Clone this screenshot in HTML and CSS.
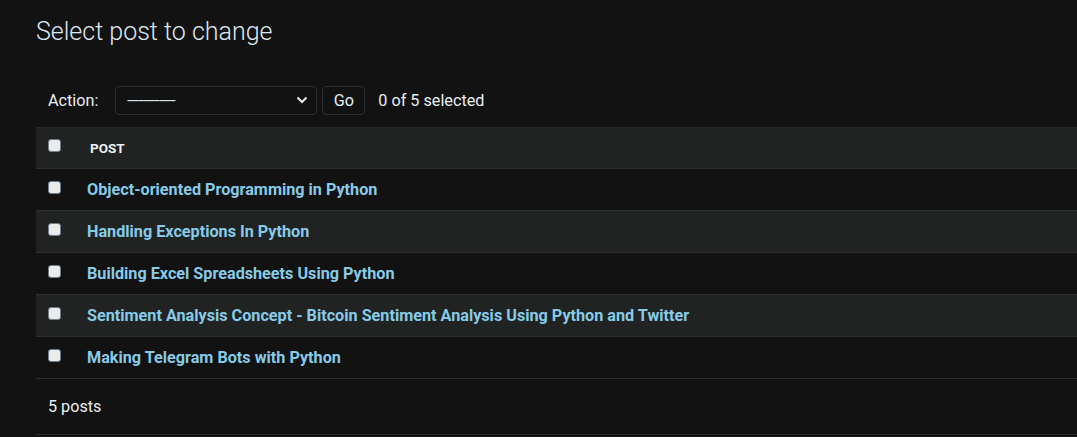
FILE: index.html
```html
<!DOCTYPE html>
<html>
<head>
<meta charset="utf-8">
<link rel="stylesheet" href="styles.css">
</head>
<body>
<div class="content">
  <h1 class="title">Select post to change</h1>
  <div class="actions">
    <label class="action-label">Action:</label>
    <div class="select">
      <span class="select-value">---------</span>
      <svg class="chev" width="12" height="8" viewBox="0 0 12 8"><path d="M1.5 1.5 L6 6 L10.5 1.5" fill="none" stroke="#e8e8e8" stroke-width="2"/></svg>
    </div>
    <button class="go">Go</button>
    <span class="counter">0 of 5 selected</span>
  </div>
  <table class="results">
    <thead>
      <tr><th class="cb"><span class="box"></span></th><th class="col">POST</th></tr>
    </thead>
    <tbody>
      <tr><td class="cb"><span class="box"></span></td><td><a>Object-oriented Programming in Python</a></td></tr>
      <tr><td class="cb"><span class="box"></span></td><td><a>Handling Exceptions In Python</a></td></tr>
      <tr><td class="cb"><span class="box"></span></td><td><a>Building Excel Spreadsheets Using Python</a></td></tr>
      <tr><td class="cb"><span class="box"></span></td><td><a>Sentiment Analysis Concept - Bitcoin Sentiment Analysis Using Python and Twitter</a></td></tr>
      <tr><td class="cb"><span class="box"></span></td><td><a>Making Telegram Bots with Python</a></td></tr>
    </tbody>
  </table>
  <p class="paginator">5 posts</p>
</div>
</body>
</html>
```
FILE: styles.css
```css
html, body {
  margin: 0;
  padding: 0;
  background: #121212;
  font-family: Roboto, "Liberation Sans", sans-serif;
  color: #e8eef2;
}
.content {
  padding: 0 0 0 36px;
}
.title {
  margin: 0;
  padding-top: 17px;
  font-size: 25px;
  font-weight: 300;
  line-height: 30px;
  color: #dfe8ee;
}
.actions {
  display: flex;
  align-items: center;
  height: 30px;
  margin-top: 38px;
  padding-left: 12px;
  font-size: 16.2px;
}
.action-label {
  margin-right: 17px;
}
.select {
  width: 202px;
  height: 29px;
  box-sizing: border-box;
  border: 1px solid #2b3036;
  border-radius: 4px;
  display: flex;
  align-items: center;
  justify-content: space-between;
  padding: 0 8px 0 11px;
}
.select-value {
  display: inline-block;
  color: #dfe8ee;
  font-size: 15px;
  letter-spacing: -0.6px;
  transform: scaleX(1.5);
  transform-origin: left center;
}
.go {
  margin-left: 5px;
  height: 29px;
  width: 43px;
  box-sizing: border-box;
  background: #121212;
  border: 1px solid #2b3036;
  border-radius: 4px;
  color: #e8eef2;
  font-family: inherit;
  font-size: 16.2px;
  padding: 0;
}
.counter {
  margin-left: 13px;
}
.results {
  margin-top: 12px;
  width: 1041px;
  border-collapse: collapse;
}
.results th, .results td {
  padding: 0;
  text-align: left;
  vertical-align: middle;
}
.results thead tr {
  background: #212323;
  height: 41px;
  border-top: 1px solid #25292e;
  border-bottom: 1px solid #2c3138;
}
.results tbody tr {
  height: 42px;
  border-bottom: 1px solid #2c3138;
}
.results tbody tr:nth-child(even) {
  background: #212323;
}
.cb {
  width: 39px;
  padding-left: 12px !important;
}
.box {
  display: block;
  width: 13px;
  height: 13px;
  box-sizing: border-box;
  background: #e9ebec;
  border: 1px solid #6f7f8a;
  border-radius: 3px;
  margin-top: -5px;
}
.col {
  font-size: 13.5px;
  font-weight: 700;
  color: #eef2f4;
  padding-left: 3px !important;
}
.results a {
  color: #86cbe8;
  font-weight: 700;
  font-size: 16.2px;
  cursor: pointer;
}
.paginator {
  margin: 0;
  width: 1041px;
  box-sizing: border-box;
  height: 56px;
  line-height: 56px;
  padding-left: 12px;
  font-size: 16.2px;
  border-bottom: 1px solid #2c3138;
}
```
